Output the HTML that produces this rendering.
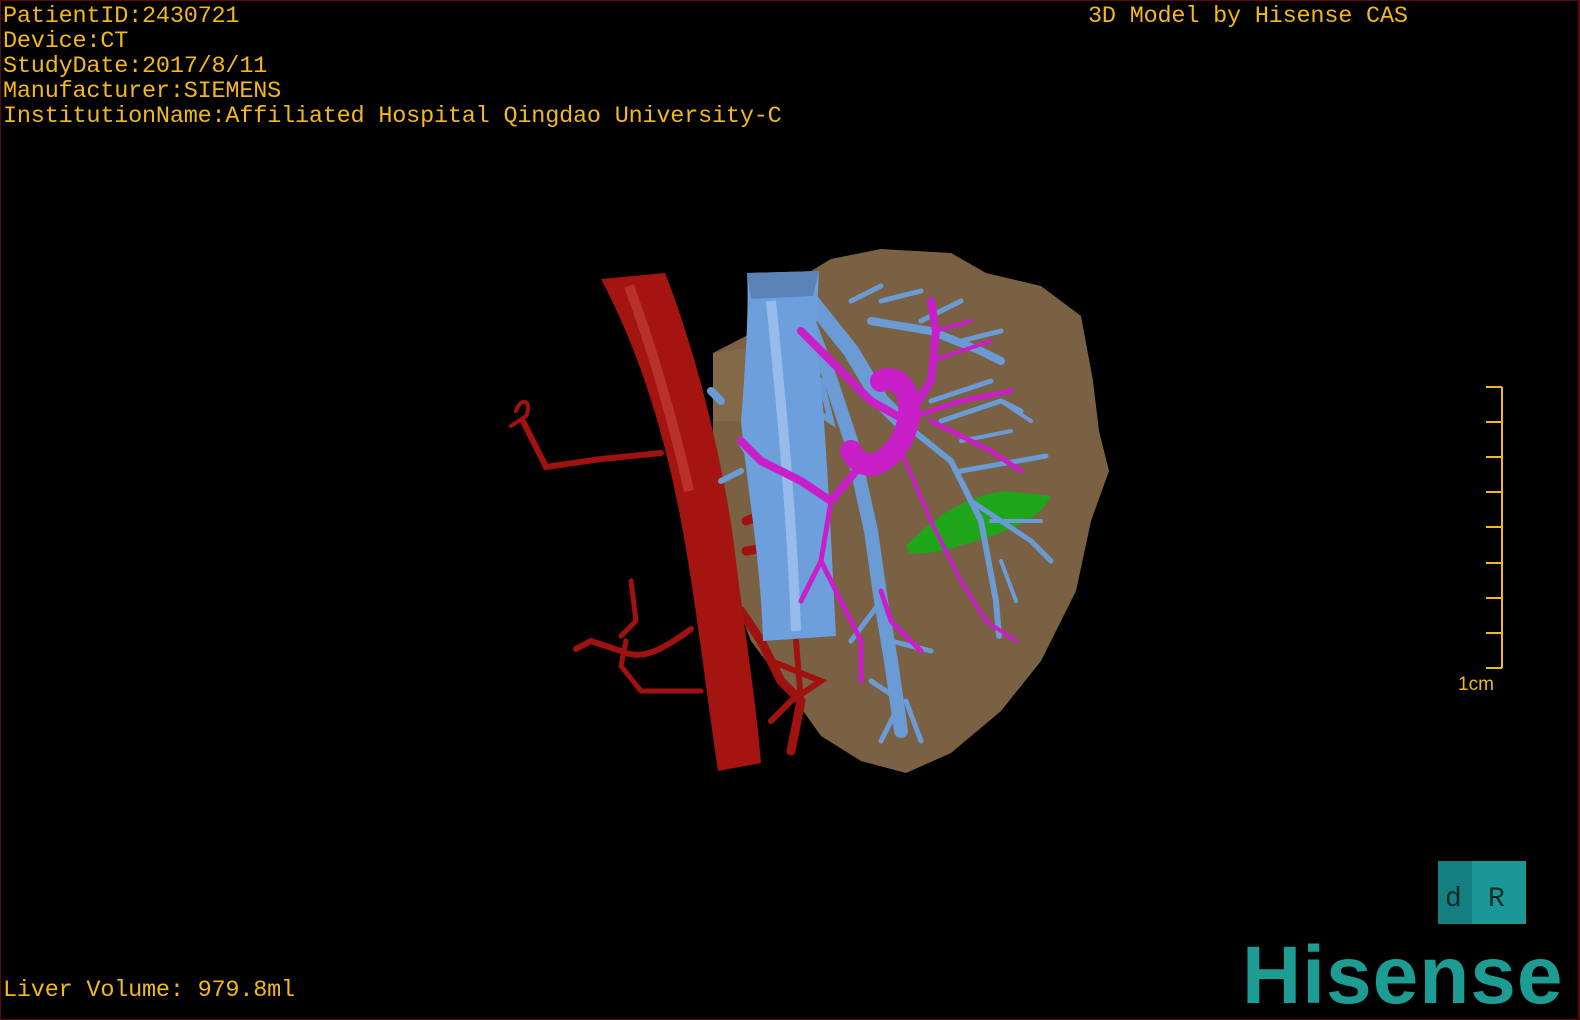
<!DOCTYPE html>
<html><head><meta charset="utf-8"><style>
html,body{margin:0;padding:0;background:#000;}
#v{position:relative;width:1580px;height:1020px;background:#000;overflow:hidden;box-sizing:border-box;border:1px solid #5a0c0c;border-right:2px solid #5a0c0c;}
.t{position:absolute;left:2px;font-family:"Liberation Mono",monospace;font-size:23.5px;line-height:25px;color:#f2b81c;white-space:pre;letter-spacing:-0.2px;}
svg{position:absolute;left:0;top:0;}
.logo{position:absolute;left:1241px;top:933px;font-family:"Liberation Sans",sans-serif;font-weight:bold;font-size:82px;color:#1d9c94;letter-spacing:1px;line-height:84px;}
</style></head><body><div id="v">
<div class="t" style="top:3px">PatientID:2430721
Device:CT
StudyDate:2017/8/11
Manufacturer:SIEMENS
InstitutionName:Affiliated Hospital Qingdao University-C</div>
<div class="t" style="top:3px;left:1087px">3D Model by Hisense CAS</div>
<div class="t" style="top:977px">Liver Volume: 979.8ml</div>
<svg width="1580" height="1020" viewBox="0 0 1580 1020">
<path d="M712 352 L745 335 L790 282 L830 258 L880 248 L950 252 L985 272 L1040 285 L1080 315 L1092 380 L1098 430 L1108 470 L1090 520 L1075 590 L1040 660 L1000 710 L950 752 L905 772 L860 760 L820 735 L795 700 L750 640 L720 560 L712 470 Z" fill="#7a6143"/>
<path d="M712 352 L760 345 L760 420 L712 420 Z" fill="#8a6e4c" opacity=".6"/>
<path d="M905 545 C930 520 960 495 1005 490 L1050 495 C1040 515 1020 525 990 535 C960 545 930 555 908 552 Z" fill="#1fa51a"/>
<g stroke="#a0120f" fill="none" stroke-linecap="round">
<path d="M660 452 L600 458 L545 466 L532 440 L522 420" stroke-width="6"/>
<path d="M515 410 C520 395 532 400 525 415 L510 425" stroke-width="4"/>
<path d="M690 628 C660 650 640 660 620 650 L590 640 L575 648" stroke-width="6"/>
<path d="M630 580 L635 620 L620 635" stroke-width="5"/>
<path d="M700 690 L640 690 L620 665 L625 640" stroke-width="5"/>
<path d="M745 520 L770 510 M745 550 L775 545 M740 610 L760 640 L780 680 L800 700 L790 750" stroke-width="9"/>
<path d="M795 640 L800 700 M770 660 L820 680 L790 700 L770 720" stroke-width="6"/>
</g>
<path d="M600 278 L664 272 C695 350 725 470 735 560 C745 640 755 700 760 762 L717 770 C705 690 695 600 680 520 C663 430 638 350 600 278 Z" fill="#a41512"/>
<path d="M628 285 C652 350 672 420 688 490" stroke="#c94a40" stroke-width="10" fill="none" opacity=".55"/>
<g stroke="#6b9bd4" fill="none" stroke-linecap="round">
<path d="M810 300 L850 350 L880 400 L900 420" stroke-width="16"/>
<path d="M800 300 L830 380 L850 440 L870 530 L880 600 L890 660 L900 730" stroke-width="14"/>
<path d="M880 600 L850 640 M890 640 L930 650 M900 700 L870 680 M900 700 L880 740 M905 700 L920 740" stroke-width="5"/>
<path d="M870 320 L930 330 L980 350 L1000 360" stroke-width="8"/>
<path d="M880 300 L920 290 M850 300 L880 285 M920 320 L960 300 M960 340 L1000 330" stroke-width="5"/>
<path d="M900 420 L950 460 L980 520 L995 600 L998 635" stroke-width="6"/>
<path d="M940 420 L1000 400 L1020 410 M930 400 L990 380 M960 470 L1045 455 M970 500 L1030 540 L1050 560" stroke-width="5"/>
<path d="M960 440 L1010 430 M1000 400 L1030 420 M990 520 L1040 520 M1000 560 L1015 600" stroke-width="4"/>
<path d="M740 440 L760 470 L780 520 L790 600 M720 400 L710 390" stroke-width="8"/>
<path d="M740 470 L720 480 M820 380 L830 420 L815 410" stroke-width="6"/>
</g>
<path d="M746 272 L818 270 L815 330 C825 420 830 540 835 635 L762 640 C760 560 745 480 740 420 C745 360 748 300 746 272 Z" fill="#6d9fdc"/>
<path d="M770 300 C780 400 790 500 795 630" stroke="#a9c8f0" stroke-width="10" fill="none" opacity=".7"/>
<path d="M746 272 L818 270 L812 295 L750 298 Z" fill="#5b83b8"/>
<g stroke="#c81fc8" fill="none" stroke-linecap="round">
<path d="M800 330 L840 370 L870 400 L905 420 L930 380 L935 330 L930 300" stroke-width="8"/>
<path d="M880 380 C900 370 920 400 900 440 C880 470 860 470 850 450" stroke-width="22"/>
<path d="M900 420 L960 400 L1010 390 M930 420 L990 450 L1020 470" stroke-width="5"/>
<path d="M935 330 L970 320 M930 360 L990 340" stroke-width="4"/>
<path d="M855 470 L830 500 L800 480 L760 460 L740 440" stroke-width="8"/>
<path d="M830 500 L820 560 L800 600 M820 560 L840 600 L860 640 L860 680" stroke-width="5"/>
<path d="M900 450 L930 520 L960 580 L985 620 L1015 640" stroke-width="4"/>
<path d="M880 590 L890 620 L900 630 L920 650" stroke-width="5"/>
</g>
<g stroke="#f2b81c" stroke-width="2" fill="none">
<path d="M1501 386 V667 M1485 386 H1501 M1485 421 H1501 M1485 456 H1501 M1485 491 H1501 M1485 526 H1501 M1485 562 H1501 M1485 597 H1501 M1485 632 H1501 M1485 667 H1501"/>
</g>
<text x="1457" y="689" font-family="Liberation Sans,sans-serif" font-size="19" fill="#f2b81c">1cm</text>
<rect x="1437" y="860" width="34" height="63" fill="#147f80"/>
<rect x="1471" y="860" width="54" height="63" fill="#1a9898"/>
<text x="1444" y="905" font-family="Liberation Mono,monospace" font-size="28" fill="#0a2a2a">d</text>
<text x="1487" y="905" font-family="Liberation Mono,monospace" font-size="28" fill="#0a2a2a">R</text>
</svg>
<div class="logo">Hisense</div>
</div></body></html>
